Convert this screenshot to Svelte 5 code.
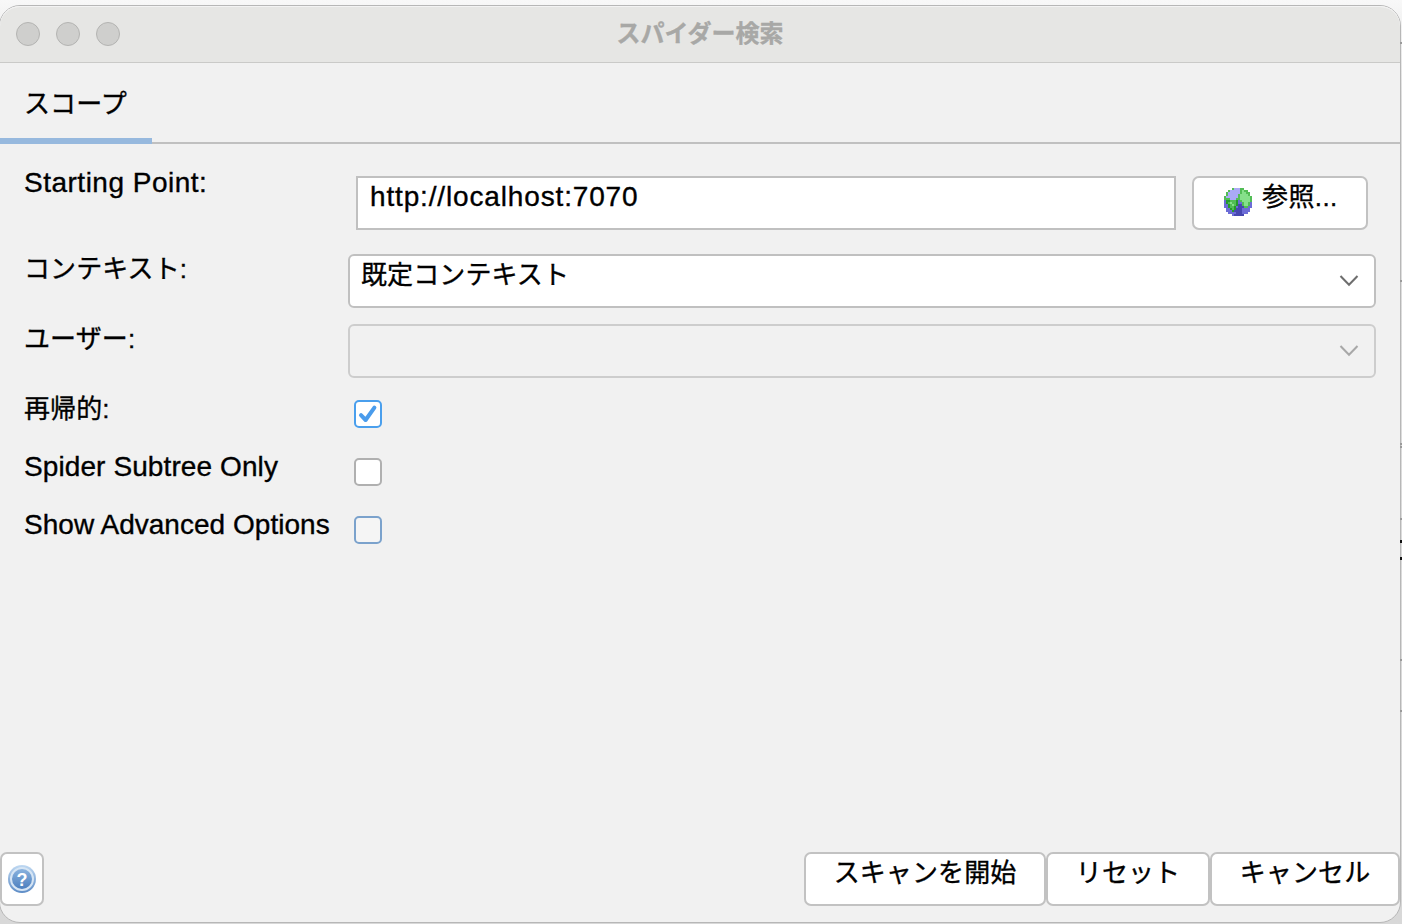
<script>
  let startUrl = $state('http://localhost:7070');
  let options = $state([
    { label: '再帰的:', kind: 'ja', checked: true, focused: false },
    { label: 'Spider Subtree Only', kind: 'subtree', checked: false, focused: false },
    { label: 'Show Advanced Options', kind: 'advanced', checked: false, focused: true }
  ]);

  // 14x14 pixel icon, one letter per colour
  const palette = {
    g: '#85e08a', G: '#52bd55', D: '#259a2c',
    b: '#aaaaf6', B: '#6c6cd6', N: '#4747b0'
  };
  const globe = [
    '....GbbbGG....',
    '..GbbbbbGgGG..',
    '.GbbbbbbGggGG.',
    '.GbbbbbGggggG.',
    'GbbbbbbGgggggG',
    'GGGbbbGGgggggG',
    'BDDGGGDBGggggG',
    'BDGgGGDBBGggGB',
    'BBDGgGDNNGggGB',
    'BBDGGDBNNNGGBB',
    '.BBDGDNNNBBBB.',
    '.BBBDNNNNBBBB.',
    '..BBBBNNNBBB..',
    '....BNNNNN....'
  ];
</script>

<div class="desktop">
  <i class="mark" style="top: 42px"></i>
  <i class="mark" style="top: 280px"></i>
  <i class="mark" style="top: 443px"></i>
  <i class="mark" style="top: 446px"></i>
  <i class="mark" style="top: 518px"></i>
  <i class="mark dark" style="top: 540px"></i>
  <i class="mark dark" style="top: 557px"></i>
  <i class="mark" style="top: 659px"></i>
  <i class="mark" style="top: 710px"></i>

  <div class="window">
    <header class="titlebar">
      <div class="lights"><span></span><span></span><span></span></div>
      <h1>スパイダー検索</h1>
    </header>

    <nav class="tabs">
      <button class="tab">スコープ</button>
    </nav>

    <main>
      <div class="row first">
        <label class="start" for="start">Starting Point:</label>
        <input id="start" class="url" type="text" bind:value={startUrl} spellcheck="false" />
        <button class="btn browse">
          <svg width="28" height="28" viewBox="0 0 14 14" shape-rendering="crispEdges">
            {#each globe as line, y}
              {#each line.split('') as c, x}
                {#if c !== '.'}
                  <rect {x} {y} width="1" height="1" fill={palette[c]} />
                {/if}
              {/each}
            {/each}
          </svg>
          <span>参照...</span>
        </button>
      </div>

      <div class="row">
        <div class="label">コンテキスト:</div>
        <button class="combo">
          <span>既定コンテキスト</span>
          <svg width="20" height="12" viewBox="0 0 20 12"><path d="M1.5 1L10 9.8L18.5 1" /></svg>
        </button>
      </div>

      <div class="row">
        <div class="label">ユーザー:</div>
        <button class="combo disabled" disabled>
          <span></span>
          <svg width="20" height="12" viewBox="0 0 20 12"><path d="M1.5 1L10 9.8L18.5 1" /></svg>
        </button>
      </div>

      {#each options as opt}
        <div class="row short">
          <div class="label {opt.kind}">{opt.label}</div>
          <button
            class="check"
            class:checked={opt.checked}
            class:focused={opt.focused}
            aria-label={opt.label}
            onclick={() => (opt.checked = !opt.checked)}
          >
            {#if opt.checked}
              <svg width="24" height="24" viewBox="0 0 24 24"><path d="M5 13.2L9.6 18L18.4 5.6" /></svg>
            {/if}
          </button>
        </div>
      {/each}
    </main>

    <footer>
      <button class="btn help" aria-label="Help">
        <svg width="28" height="28" viewBox="0 0 28 28">
          <defs>
            <linearGradient id="ring" x1="0" y1="0" x2="0" y2="1">
              <stop offset="0" stop-color="#c0d9f2" />
              <stop offset="1" stop-color="#5d8cc6" />
            </linearGradient>
            <linearGradient id="disc" x1="0" y1="0" x2="0" y2="1">
              <stop offset="0" stop-color="#8db5e0" />
              <stop offset="1" stop-color="#4a7dbd" />
            </linearGradient>
          </defs>
          <circle cx="14" cy="14" r="14" fill="url(#ring)" />
          <circle cx="14" cy="14" r="11" fill="url(#disc)" stroke="#d6e5f4" stroke-width="2" />
          <text x="14" y="20.5" text-anchor="middle">?</text>
        </svg>
      </button>
      <div class="actions">
        <button class="btn scan">スキャンを開始</button>
        <button class="btn reset">リセット</button>
        <button class="btn cancel">キャンセル</button>
      </div>
    </footer>
  </div>
</div>

<style>
  :global(body) {
    background: #f6f6f6;
    overflow: hidden;
  }

  .desktop {
    position: relative;
    width: 1402px;
    height: 924px;
    padding-top: 5px;
    box-sizing: border-box;
    overflow: hidden;
    background: linear-gradient(#f8f8f8 0, #f0f0f0 30px, #dedede 100px, #d8d8d8);
    font-family: 'Liberation Sans', 'Noto Sans CJK JP', sans-serif;
    font-size: 26px;
    line-height: 30px;
    letter-spacing: 0.1px;
    color: #000;
    -webkit-text-stroke: 0.35px;
  }

  .window {
    width: 1402px;
    height: 918px;
    margin-left: -1px;
    box-sizing: border-box;
    display: flex;
    flex-direction: column;
    background: #f1f1f1;
    border: 1px solid #b7b7b7;
    border-radius: 21px;
  }

  /* slivers of the window behind, at the right edge */
  .mark {
    position: absolute;
    z-index: 1;
    right: 0;
    width: 2px;
    height: 2px;
    background: #9a9a9a;
  }

  .mark.dark {
    height: 3px;
    background: #111;
  }

  button,
  input {
    font: inherit;
    letter-spacing: inherit;
    color: inherit;
    margin: 0;
    box-sizing: border-box;
    outline: none;
  }

  .titlebar {
    height: 57px;
    box-sizing: border-box;
    display: grid;
    grid-template-columns: 1fr auto 1fr;
    background: #e6e6e4;
    border-bottom: 1px solid #cacac8;
    border-radius: 20px 20px 0 0;
    box-shadow: inset 0 1px 0 #f3f3f3;
  }

  .lights {
    display: flex;
    gap: 16px;
    padding: 16px 0 0 16px;
  }

  .lights span {
    width: 24px;
    height: 24px;
    box-sizing: border-box;
    border-radius: 50%;
    background: #cfcfcd;
    border: 1px solid #b4b4b2;
  }

  h1 {
    margin: 0;
    padding-top: 13px;
    font-size: 24px;
    font-weight: 700;
    letter-spacing: 0;
    color: #a8a8a6;
  }

  .tabs {
    height: 81px;
    box-sizing: border-box;
    border-bottom: 2px solid #c0c0c0;
  }

  .tab {
    width: 152px;
    height: 81px;
    padding: 7px 0 0 24px;
    border: 0;
    border-bottom: 6px solid #97b9de;
    background: none;
    text-align: left;
  }

  main {
    flex: 1;
    padding: 24px 0 0 24px;
  }

  .row {
    display: flex;
    align-items: flex-start;
    height: 70px;
  }

  .row.first {
    height: 86px;
  }

  .row.short {
    height: 58px;
  }

  .label,
  .start {
    flex: none;
    width: 324px;
    white-space: nowrap;
  }

  .start {
    font-size: 28px;
    letter-spacing: 0.5px;
  }

  .subtree {
    font-size: 28px;
    letter-spacing: 0.1px;
  }

  .advanced {
    font-size: 28px;
    letter-spacing: 0.03px;
  }

  .url {
    width: 820px;
    height: 54px;
    margin: 8px 16px 0 8px;
    padding: 0 12px 12px;
    border: 2px solid #c0c0c0;
    border-radius: 0;
    background: #fff;
    font-size: 28px;
    letter-spacing: 0.85px;
  }

  .btn {
    height: 54px;
    padding: 0 0 13px;
    border: 2px solid #c2c2c2;
    border-radius: 7px;
    background: #fff;
    white-space: nowrap;
  }

  .browse {
    width: 176px;
    margin-top: 8px;
    padding: 0 0 0 30px;
    display: flex;
    gap: 10px;
  }

  .browse svg {
    margin-top: 10px;
  }

  .browse span {
    margin-top: 4px;
    letter-spacing: 0.4px;
  }

  .combo {
    width: 1028px;
    height: 54px;
    padding: 4px 15px 0 11px;
    display: flex;
    justify-content: space-between;
    border: 2px solid #c0c0c0;
    border-radius: 6px;
    background: #fff;
  }

  .combo svg {
    margin-top: 15px;
    fill: none;
    stroke: #6e6e6e;
    stroke-width: 2;
  }

  .combo.disabled {
    background: #f1f1f1;
    border-color: #cdcdcd;
  }

  .combo.disabled svg {
    stroke: #a8a8a8;
  }

  .check {
    width: 28px;
    height: 28px;
    margin: 6px 0 0 6px;
    padding: 0;
    display: flex;
    border: 2px solid #b0b0b0;
    border-radius: 5px;
    background: #fff;
  }

  .check.checked {
    border-color: #4a9fed;
  }

  .check.focused {
    border-color: #7ba2cc;
    background: #f5f5f5;
  }

  .check path {
    fill: none;
    stroke: #4a9cec;
    stroke-width: 4;
    stroke-linecap: round;
    stroke-linejoin: round;
  }

  footer {
    display: flex;
    justify-content: space-between;
    height: 70px;
  }

  .help {
    width: 44px;
    padding: 0;
    display: flex;
    align-items: center;
    justify-content: center;
  }

  .help text {
    fill: #fff;
    stroke: none;
    font-size: 18px;
    font-weight: 700;
  }

  .actions {
    display: flex;
  }

  .scan { width: 242px; }
  .reset { width: 164px; }
  .cancel { width: 190px; }
</style>
